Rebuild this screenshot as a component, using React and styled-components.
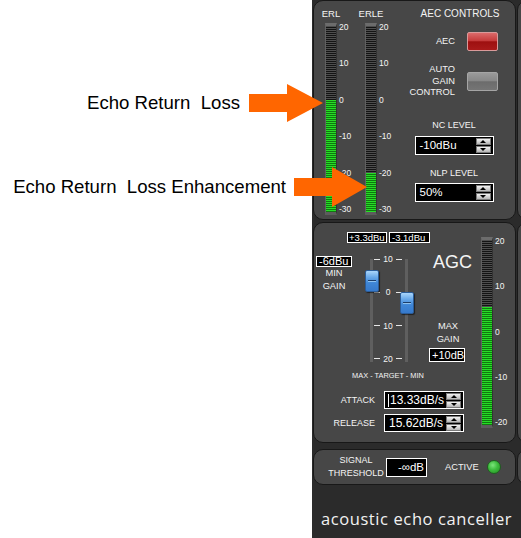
import React from 'react'
import styled, { createGlobalStyle } from 'styled-components'

const GlobalStyle = createGlobalStyle`
  html, body {
    margin: 0;
    padding: 0;
    background: #fff;
  }
  body {
    font-family: "Liberation Sans", Arial, sans-serif;
  }
`

const Page = styled.div`
  display: flex;
  width: 521px;
  height: 538px;
  overflow: hidden;
`

// annotations on the white side, arrows poke into the device
const Notes = styled.div`
  position: relative;
  z-index: 2;
  width: 312px;
  flex-shrink: 0;
  padding-top: 84px;
  box-sizing: border-box;
`

const Note = styled.div`
  display: flex;
  align-items: center;
  justify-content: flex-end;
  gap: ${p => p.$gap}px;
  margin-top: ${p => p.$mt}px;
  margin-right: ${p => p.$mr}px;
`

const NoteText = styled.span`
  font-family: "Liberation Sans", Arial, sans-serif;
  font-size: 18.6px;
  color: #000;
  white-space: pre;
`

const Arrow = ({ w, h, shaft }) => {
  const head = 38
  const s0 = (h - shaft) / 2
  const s1 = s0 + shaft
  return (
    <svg width={w} height={h} viewBox={`0 0 ${w} ${h}`} style={{ display: 'block', flexShrink: 0 }}>
      <polygon
        points={`0,${s0} ${head},${s0} ${head},0 ${w},${h / 2} ${head},${h} ${head},${s1} 0,${s1}`}
        fill="#ff6600"
      />
    </svg>
  )
}

const Device = styled.div`
  width: 209px;
  flex-shrink: 0;
  background: #2b2b2b;
  overflow: hidden;
  color: #f4f4f4;
`

const Columns = styled.div`
  display: flex;
`

const MainCol = styled.div`
  width: 203px;
  margin-left: 1px;
  flex-shrink: 0;
  display: flex;
  flex-direction: column;
`

const SideCol = styled.div`
  width: 60px;
  margin-left: 1px;
  flex-shrink: 0;
  display: flex;
  flex-direction: column;
`

const Panel = styled.div`
  height: ${p => p.$h}px;
  margin-top: ${p => p.$mt || 0}px;
  background: #474747;
  border: 1px solid #181818;
  border-radius: 10px;
  box-sizing: border-box;
`

const AecPanel = styled(Panel)`
  display: flex;
  align-items: flex-start;
  padding: 8px 0 0 11px;
`

const AgcPanel = styled(Panel)`
  display: flex;
  align-items: flex-start;
`

const ThreshPanel = styled(Panel)`
  display: flex;
  align-items: center;
  padding-left: 12px;
`

/* meters */
const MeterBlock = styled.div`
  width: ${p => p.$w}px;
  flex-shrink: 0;
  display: flex;
  flex-direction: column;
  margin-top: ${p => p.$mt || 0}px;
  margin-left: ${p => p.$ml || 0}px;
`

const MeterLabel = styled.div`
  width: 12px;
  height: 10px;
  line-height: 10px;
  font-size: 9.5px;
  display: flex;
  justify-content: center;
  white-space: nowrap;
  margin-bottom: 4px;
`

const MeterRow = styled.div`
  display: flex;
`

const MeterBar = styled.div`
  width: 12px;
  height: ${p => p.$h}px;
  box-sizing: border-box;
  display: flex;
  flex-direction: column;
  justify-content: flex-end;
  border-top: 3px solid #6c6c6c;
  border-bottom: 3px solid #5c5c5c;
  border-left: 1px solid #616161;
  border-right: 1px solid #333;
  background: repeating-linear-gradient(to bottom, #4e4e4e 0 1px, #141414 1px 2px);
`

const MeterFill = styled.div`
  background: repeating-linear-gradient(to bottom, #27dd27 0 1px, #0f7a0f 1px 2px);
`

const Scale = styled.div`
  margin-left: 2px;
  height: ${p => p.$h}px;
  display: flex;
  flex-direction: column;
  justify-content: space-between;
  padding-bottom: 2px;
  box-sizing: border-box;
  font-size: 8.5px;
  line-height: 8px;
`

const Meter = ({ label, height, level, ticks, w = 40, mt, ml }) => (
  <MeterBlock $w={w} $mt={mt} $ml={ml}>
    {label && <MeterLabel>{label}</MeterLabel>}
    <MeterRow>
      <MeterBar $h={height}>
        <MeterFill style={{ height: `${level}%` }} />
      </MeterBar>
      <Scale $h={height}>
        {ticks.map(t => <span key={t}>{t}</span>)}
      </Scale>
    </MeterRow>
  </MeterBlock>
)

/* AEC controls */
const Controls = styled.div`
  flex: 1;
  display: flex;
  flex-direction: column;
`

const Title = styled.div`
  margin-top: -1px;
  font-size: 10px;
  line-height: 12px;
  text-align: center;
  white-space: nowrap;
`

const ToggleRow = styled.div`
  display: flex;
  align-items: center;
  justify-content: flex-end;
  gap: 12px;
  padding-right: 17px;
  margin-top: ${p => p.$mt}px;
`

const ToggleLabel = styled.div`
  font-size: 9.3px;
  line-height: 11.5px;
  text-align: right;
`

const Toggle = styled.div`
  width: 31px;
  height: 19px;
  box-sizing: border-box;
  border-radius: 2px;
  border: 1px solid ${p => (p.$on ? '#d99a9a' : '#a5a5a5')};
  background: ${p =>
    p.$on
      ? 'linear-gradient(to bottom, #dc6a6a 0%, #c63c3c 45%, #9e1010 52%, #aa1a1a 100%)'
      : 'linear-gradient(to bottom, #9a9a9a 0%, #888 45%, #6c6c6c 52%, #757575 100%)'};
`

const Field = styled.div`
  display: flex;
  flex-direction: column;
  align-items: center;
  padding-right: 12px;
  margin-top: ${p => p.$mt}px;
`

const FieldLabel = styled.div`
  font-size: 9px;
  line-height: 11px;
  margin-bottom: ${p => p.$mb}px;
`

const ValueBox = styled.div`
  width: ${p => p.$w}px;
  height: ${p => p.$h}px;
  box-sizing: border-box;
  border: 1px solid #fff;
  background: #000;
  color: #fff;
  font-size: ${p => p.$fs || 11.5}px;
  line-height: ${p => p.$h - 2}px;
  display: flex;
  align-items: center;
  justify-content: ${p => p.$justify || 'space-between'};
  padding: 0 ${p => p.$pr ?? 2}px 0 ${p => p.$pl ?? 4}px;
  white-space: nowrap;
`

const Spin = styled.div`
  display: flex;
  flex-direction: column;
  gap: 1px;
`

const SpinBtn = styled.div`
  width: 15px;
  height: 7px;
  box-sizing: border-box;
  border: 1px solid #7a7a7a;
  background: linear-gradient(to bottom, #f2f2f2, #b6b6b6);
  display: flex;
  align-items: center;
  justify-content: center;
  &::after {
    content: '';
    border-left: 3.5px solid transparent;
    border-right: 3.5px solid transparent;
    ${p => (p.$down ? 'border-top' : 'border-bottom')}: 3px solid #000;
  }
`

const Spinner = () => (
  <Spin>
    <SpinBtn />
    <SpinBtn $down />
  </Spin>
)

/* AGC */
const AgcMain = styled.div`
  width: 164px;
  flex-shrink: 0;
  display: flex;
  flex-direction: column;
`

const ValueRow = styled.div`
  display: flex;
  gap: 2px;
  margin: 9px 0 0 33px;
`

const BodyRow = styled.div`
  display: flex;
  align-items: flex-start;
  margin-top: 9px;
`

const MinCol = styled.div`
  width: 36px;
  margin-left: 2px;
  padding-top: 4px;
  display: flex;
  flex-direction: column;
  align-items: center;
`

const SmallLabel = styled.div`
  font-size: 9.3px;
  line-height: 13px;
  text-align: center;
`

const Slider = styled.div`
  display: flex;
  margin: 3px 0 0 18px;
`

const Track = styled.div`
  position: relative;
  width: 3px;
  height: 103px;
  margin-top: 4px;
  background: #5f5f5f;
`

const Thumb = styled.div`
  position: absolute;
  left: 50%;
  top: ${p => p.$top}px;
  width: 14px;
  height: 22px;
  margin-left: -7px;
  box-sizing: border-box;
  border-radius: 2px;
  border: 1px solid #2b5c98;
  background: linear-gradient(to bottom, #a9d5fa 0%, #6aaaea 30%, #3f86d6 60%, #3679cb 100%);
  box-shadow: 1px 1px 1px rgba(0, 0, 0, 0.55);
  &::after {
    content: '';
    position: absolute;
    left: 2px;
    right: 2px;
    top: 9px;
    height: 1px;
    background: #1c3d69;
    border-bottom: 1px solid #8ec2f0;
  }
`

const TickCol = styled.div`
  width: 32px;
  height: 108px;
  box-sizing: border-box;
  padding: 0 3px 0 1px;
  display: flex;
  flex-direction: column;
  justify-content: space-between;
`

const Tick = styled.div`
  display: flex;
  align-items: center;
  height: 8px;
  font-size: 8.5px;
  line-height: 8px;
`

const Dash = styled.span`
  width: 6px;
  height: 1px;
  background: #e6e6e6;
`

const TickNum = styled.span`
  flex: 1;
  text-align: center;
`

const RightCol = styled.div`
  margin-left: 21px;
  display: flex;
  flex-direction: column;
  align-items: flex-start;
`

const AgcTitle = styled.div`
  font-size: 18px;
  line-height: 20px;
  margin-left: 4px;
`

const MaxGain = styled(SmallLabel)`
  width: 38px;
  margin-top: 48px;
  margin-bottom: 1.5px;
`

const Caption = styled.div`
  width: 148px;
  margin-top: 8px;
  font-size: 7.4px;
  line-height: 10px;
  text-align: center;
  white-space: nowrap;
`

const RateRow = styled.div`
  display: flex;
  align-items: center;
  gap: 9px;
  margin-top: ${p => p.$mt}px;
`

const RateLabel = styled.div`
  width: 61px;
  font-size: 9px;
  text-align: right;
`

const Caret = styled.span`
  display: inline-block;
  width: 1px;
  height: 13px;
  background: #fff;
  margin-right: 1px;
  vertical-align: middle;
`

/* threshold */
const SigLabel = styled.div`
  width: 60px;
  font-size: 9px;
  line-height: 13px;
  text-align: center;
`

const ActiveLabel = styled.div`
  margin-left: 18px;
  font-size: 9.3px;
`

const Led = styled.div`
  width: 14px;
  height: 14px;
  margin-left: 8px;
  border-radius: 50%;
  box-sizing: border-box;
  border: 1px solid #1f5e1f;
  background: radial-gradient(circle at 40% 35%, #7ae47a 0%, #3dbb3d 45%, #228f22 100%);
`

const Footer = styled.div`
  margin-top: 24px;
  font-family: "Open Sans", "Liberation Sans", sans-serif;
  font-size: 16.5px;
  letter-spacing: 0.6px;
  line-height: 20px;
  text-align: center;
  color: #f2f2f2;
  white-space: nowrap;
`

const SliderTicks = ['10', '0', '10', '20']

export default function App() {
  return (
    <>
      <GlobalStyle />
      <Page>
        <Notes>
          <Note $gap={9} $mt={0} $mr={-11}>
            <NoteText>Echo Return  Loss</NoteText>
            <Arrow w={74} h={38} shaft={18} />
          </Note>
          <Note $gap={8} $mt={45} $mr={-55}>
            <NoteText>Echo Return  Loss Enhancement</NoteText>
            <Arrow w={73} h={40} shaft={18} />
          </Note>
        </Notes>

        <Device>
          <Columns>
            <MainCol>
              <AecPanel $h={220}>
                <Meter label="ERL" height={192} level={60} ticks={['20', '10', '0', '-10', '-20', '-30']} />
                <Meter label="ERLE" height={192} level={21} ticks={['20', '10', '0', '-10', '-20', '-30']} />
                <Controls>
                  <Title>AEC CONTROLS</Title>
                  <ToggleRow $mt={12}>
                    <ToggleLabel>AEC</ToggleLabel>
                    <Toggle $on />
                  </ToggleRow>
                  <ToggleRow $mt={13}>
                    <ToggleLabel>AUTO<br />GAIN<br />CONTROL</ToggleLabel>
                    <Toggle />
                  </ToggleRow>
                  <Field $mt={21}>
                    <FieldLabel $mb={5}>NC LEVEL</FieldLabel>
                    <ValueBox $w={79} $h={19}>
                      <span>-10dBu</span>
                      <Spinner />
                    </ValueBox>
                  </Field>
                  <Field $mt={13}>
                    <FieldLabel $mb={4}>NLP LEVEL</FieldLabel>
                    <ValueBox $w={79} $h={19}>
                      <span>50%</span>
                      <Spinner />
                    </ValueBox>
                  </Field>
                </Controls>
              </AecPanel>

              <AgcPanel $h={221} $mt={2}>
                <AgcMain>
                  <ValueRow>
                    <ValueBox $w={40} $h={11} $fs={9.5} $pl={1} $pr={1}>+3.3dBu</ValueBox>
                    <ValueBox $w={41} $h={11} $fs={9.5} $pl={2} $pr={1}>-3.1dBu</ValueBox>
                  </ValueRow>
                  <BodyRow>
                    <MinCol>
                      <ValueBox $w={36} $h={11} $fs={11} $pl={2}>-6dBu</ValueBox>
                      <SmallLabel>MIN<br />GAIN</SmallLabel>
                    </MinCol>
                    <Slider>
                      <Track>
                        <Thumb $top={11} />
                      </Track>
                      <TickCol>
                        {SliderTicks.map((t, i) => (
                          <Tick key={i}>
                            <Dash />
                            <TickNum>{t}</TickNum>
                            <Dash />
                          </Tick>
                        ))}
                      </TickCol>
                      <Track>
                        <Thumb $top={33} />
                      </Track>
                    </Slider>
                    <RightCol>
                      <AgcTitle>AGC</AgcTitle>
                      <MaxGain>MAX<br />GAIN</MaxGain>
                      <ValueBox $w={36} $h={14} $fs={11} $pl={2}>+10dB</ValueBox>
                    </RightCol>
                  </BodyRow>
                  <Caption>MAX - TARGET - MIN</Caption>
                  <RateRow $mt={10}>
                    <RateLabel>ATTACK</RateLabel>
                    <ValueBox $w={80} $h={18} $fs={12} $pl={3}>
                      <span><Caret />13.33dB/s</span>
                      <Spinner />
                    </ValueBox>
                  </RateRow>
                  <RateRow $mt={5}>
                    <RateLabel>RELEASE</RateLabel>
                    <ValueBox $w={80} $h={18} $fs={12}>
                      <span>15.62dB/s</span>
                      <Spinner />
                    </ValueBox>
                  </RateRow>
                </AgcMain>
                <Meter height={191} level={64} ticks={['20', '10', '0', '-10', '-20']} w={32} mt={14} ml={3} />
              </AgcPanel>

              <ThreshPanel $h={36} $mt={6}>
                <SigLabel>SIGNAL<br />THRESHOLD</SigLabel>
                <ValueBox $w={41} $h={19} $fs={11.5} $justify="flex-end">-∞dB</ValueBox>
                <ActiveLabel>ACTIVE</ActiveLabel>
                <Led />
              </ThreshPanel>
            </MainCol>

            <SideCol>
              <Panel $h={220} />
              <Panel $h={221} $mt={2} />
              <Panel $h={36} $mt={6} />
            </SideCol>
          </Columns>
          <Footer>acoustic echo canceller</Footer>
        </Device>
      </Page>
    </>
  )
}
